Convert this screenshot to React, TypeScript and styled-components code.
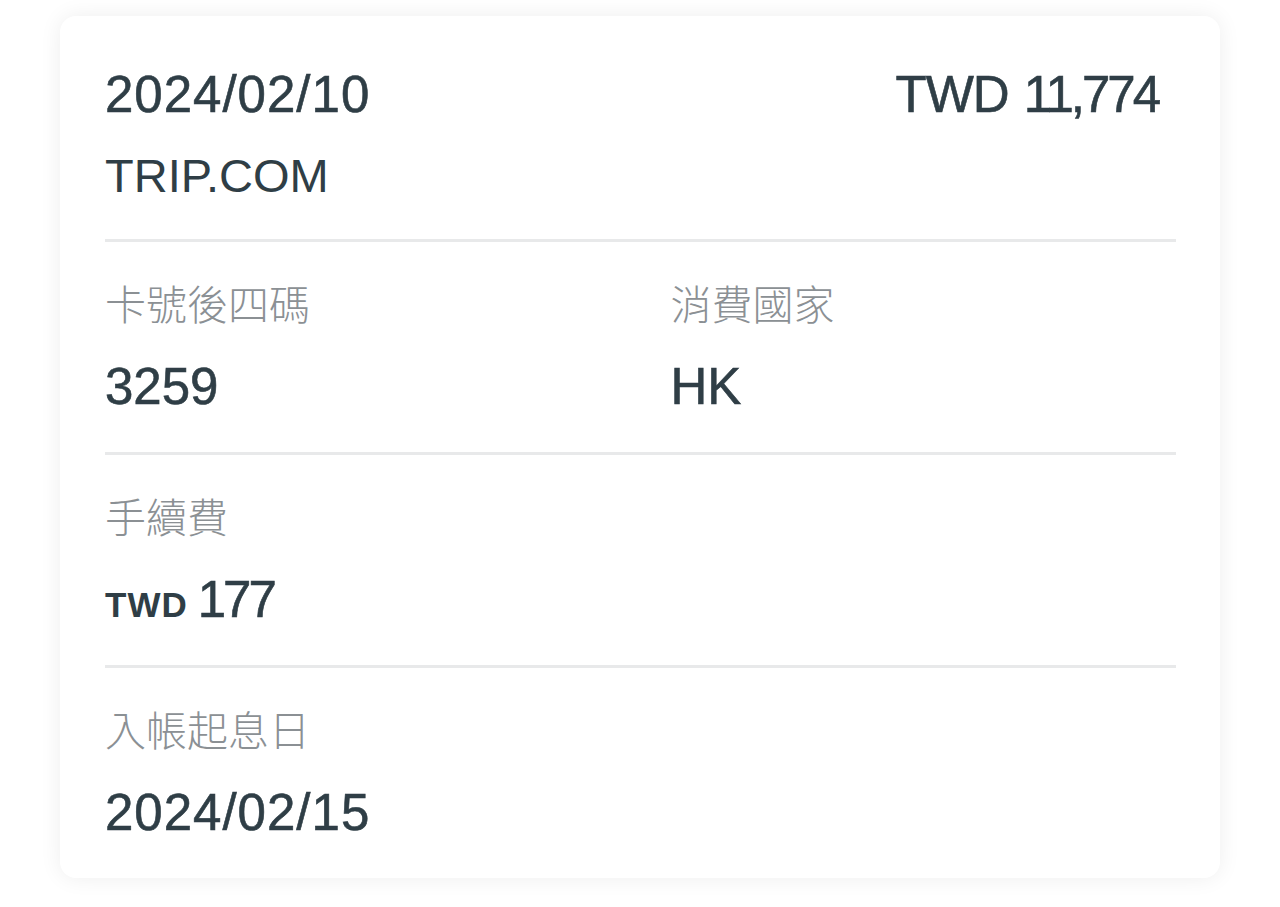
import React from "react";
import styled, { createGlobalStyle } from "styled-components";

const GlobalStyle = createGlobalStyle`
  html, body {
    margin: 0;
    padding: 0;
    background: #ffffff;
  }
  body {
    font-family: "Liberation Sans", "Noto Sans CJK TC", sans-serif;
    -webkit-font-smoothing: antialiased;
  }
`;

const Page = styled.div`
  padding: 16px 60px 30px;
`;

const Card = styled.div`
  background: #ffffff;
  border-radius: 16px;
  box-shadow: 0 0 22px rgba(0, 0, 0, 0.07);
  padding: 48px 44px 0 45px;
`;

const Header = styled.div`
  padding-bottom: 35px;
`;

const TopRow = styled.div`
  display: flex;
  justify-content: space-between;
  align-items: baseline;
  padding-right: 18px;
  margin-bottom: 23px;
`;

const Strong = styled.div<{ $wide?: boolean }>`
  font-size: 51px;
  line-height: 61px;
  color: #2f3e46;
  -webkit-text-stroke: 0.6px #2f3e46;
  letter-spacing: ${(p) => (p.$wide ? "1px" : "0")};
`;

const Merchant = styled.div`
  font-size: 47px;
  line-height: 56px;
  color: #2f3e46;
`;

const Section = styled.div<{ $cols?: number }>`
  display: grid;
  grid-template-columns: repeat(${(p) => p.$cols ?? 1}, 1fr);
  column-gap: 60px;
  border-top: 3px solid #e8e9ea;
  padding: 35px 0;
`;

const Field = styled.div`
  display: flex;
  flex-direction: column;
  gap: 29px;
`;

const Label = styled.div`
  font-family: "Noto Sans CJK TC", sans-serif;
  font-weight: 300;
  font-size: 41px;
  line-height: 50px;
  color: #8b9094;
`;

const Currency = styled.span`
  font-size: 35px;
  line-height: 1;
  font-weight: 700;
  -webkit-text-stroke: 0;
  margin-right: 10px;
  letter-spacing: 1px;
`;

// the reference font has narrow proportional digits
const Digits = styled.span<{ $squeeze?: number }>`
  letter-spacing: ${(p) => p.$squeeze ?? -3}px;
`;

const Code = styled.span`
  letter-spacing: -1px;
  margin-right: 2px;
`;

export default function App() {
  return (
    <>
      <GlobalStyle />
      <Page>
        <Card>
          <Header>
            <TopRow>
              <Strong $wide>2024/02/10</Strong>
              <Strong>
                <Code>TWD </Code>
                <Digits>11,774</Digits>
              </Strong>
            </TopRow>
            <Merchant>TRIP.COM</Merchant>
          </Header>
          <Section $cols={2}>
            <Field>
              <Label>卡號後四碼</Label>
              <Strong>3259</Strong>
            </Field>
            <Field>
              <Label>消費國家</Label>
              <Strong>HK</Strong>
            </Field>
          </Section>
          <Section>
            <Field>
              <Label>手續費</Label>
              <Strong>
                <Currency>TWD</Currency>
                <Digits>177</Digits>
              </Strong>
            </Field>
          </Section>
          <Section>
            <Field>
              <Label>入帳起息日</Label>
              <Strong $wide>2024/02/15</Strong>
            </Field>
          </Section>
        </Card>
      </Page>
    </>
  );
}
